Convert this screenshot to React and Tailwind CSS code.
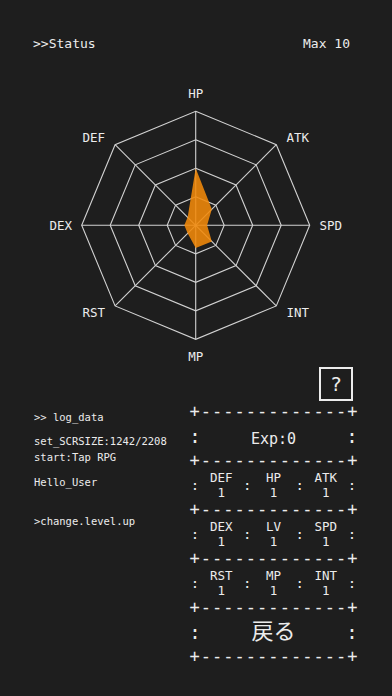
import React from 'react';

const MONO = { fontFamily: '"DejaVu Sans Mono", "Noto Sans CJK JP", monospace' };

const CX = 195.7;
const CY = 145.3;
const R = 114;

const axes = [
  { label: 'HP', value: 5, lx: 0, ly: -132 },
  { label: 'ATK', value: 2, lx: 102, ly: -88 },
  { label: 'SPD', value: 1, lx: 135, ly: 0 },
  { label: 'INT', value: 2, lx: 102, ly: 87 },
  { label: 'MP', value: 2, lx: 0, ly: 131 },
  { label: 'RST', value: 1, lx: -102, ly: 87 },
  { label: 'DEX', value: 1, lx: -135, ly: 0 },
  { label: 'DEF', value: 1, lx: -102, ly: -88 },
];

const pt = (i, r) => {
  const a = -Math.PI / 2 + (i * Math.PI) / 4;
  return [CX + r * Math.cos(a), CY + r * Math.sin(a)];
};

const ring = r => axes.map((_, i) => pt(i, r).join(',')).join(' ');

const Radar = () => (
  <svg width="392" height="285" className="block">
    {[1, 2, 3, 4].map(k => (
      <polygon key={k} points={ring((R * k) / 4)} fill="none" stroke="#d2d2d2" strokeWidth="1.1" />
    ))}
    {axes.map((_, i) => {
      const [x, y] = pt(i, R);
      return <line key={i} x1={CX} y1={CY} x2={x} y2={y} stroke="#d2d2d2" strokeWidth="1.1" />;
    })}
    <polygon
      points={axes.map((a, i) => pt(i, (R * a.value) / 10).join(',')).join(' ')}
      fill="#f28a0a"
      fillOpacity="0.88"
    />
    {axes.map(a => (
      <text
        key={a.label}
        x={CX + a.lx}
        y={CY + a.ly}
        textAnchor="middle"
        dominantBaseline="central"
        fill="#ececec"
        fontSize="12.5"
        style={MONO}
      >
        {a.label}
      </text>
    ))}
  </svg>
);

const Border = () => (
  <div className="flex justify-between items-center h-[16px] text-[17px] leading-[16px]">
    {'+-------------+'.split('').map((c, i) => (
      <span key={i} className="w-[12px] text-center">{c}</span>
    ))}
  </div>
);

const Colon = ({ size = 'text-[14px]' }) => (
  <span className={`w-[12px] text-center leading-[16px] ${size}`}>:</span>
);

const WideRow = ({ children, className = '' }) => (
  <div className="flex items-center h-[33px]">
    <Colon size="text-[19px]" />
    <div className={`flex-1 text-center ${className}`}>{children}</div>
    <Colon size="text-[19px]" />
  </div>
);

const StatCell = ({ name }) => (
  <div className="flex-1 flex flex-col items-center text-[12.5px] leading-[15px]">
    <span>{name}</span>
    <span>1</span>
  </div>
);

const StatRow = ({ names }) => (
  <div className="flex items-center h-[33px] pt-[1px]">
    <Colon />
    <StatCell name={names[0]} />
    <Colon />
    <StatCell name={names[1]} />
    <Colon />
    <StatCell name={names[2]} />
    <Colon />
  </div>
);

export default function App() {
  return (
    <div className="w-[392px] h-[696px] bg-[#1e1e1e] text-[#ececec] overflow-hidden" style={MONO}>
      <header className="h-[80px] flex justify-between pl-[33px] pr-[42px] pt-[34px] text-[13px] leading-[20px]">
        <span>&gt;&gt;Status</span>
        <span>Max 10</span>
      </header>

      <Radar />

      <div className="flex">
        <div className="flex-1 pl-[34px] pt-[44px] text-[10.5px] leading-[16px] whitespace-pre">
          <div>&gt;&gt; log_data</div>
          <div className="mt-[8px]">set_SCRSIZE:1242/2208</div>
          <div>start:Tap RPG</div>
          <div className="mt-[9px]">Hello_User</div>
          <div className="mt-[23px]">&gt;change.level.up</div>
        </div>

        <div className="w-[169px] mr-[34px] flex flex-col">
          <div className="self-end mr-[5px] mt-[2px] w-[34px] h-[34px] border-2 border-[#ececec] flex items-center justify-center text-[20px]">
            ?
          </div>
          <div className="mt-[2px]">
            <Border />
            <WideRow className="text-[15px] leading-[20px] pt-[6px]">Exp:0</WideRow>
            <Border />
            <StatRow names={['DEF', 'HP', 'ATK']} />
            <Border />
            <StatRow names={['DEX', 'LV', 'SPD']} />
            <Border />
            <StatRow names={['RST', 'MP', 'INT']} />
            <Border />
            <WideRow className="text-[22px] leading-[28px]">戻る</WideRow>
            <Border />
          </div>
        </div>
      </div>
    </div>
  );
}
